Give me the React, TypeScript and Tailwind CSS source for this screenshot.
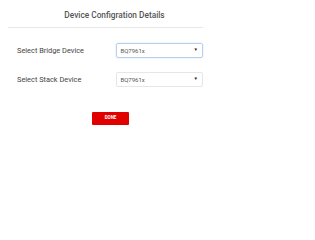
export default function App() {
  return (
    <div className="w-[315px] h-[240px] bg-white font-['Roboto',sans-serif] text-[#444]">
      <div className="w-[195px] ml-2">
        <div className="h-[28px] border-b border-[#e8e8e8] flex items-center justify-center pt-[4px] pl-[18px]">
          <h1 className="text-[8.3px] font-medium text-[#555]">Device Configration Details</h1>
        </div>
        <div className="pl-[9px] pt-[15px] flex flex-col gap-[14px]">
          <div className="flex items-center">
            <label className="w-[100px] text-[7.4px] text-[#444]">Select Bridge Device</label>
            <div className="w-[87px] h-[15px] border border-[#b8cfee] rounded-[2px] shadow-[0_0_2px_#cfe0f7] flex items-center justify-between pl-[3px] pr-1">
              <span className="text-[6px] text-[#555]">BQ7961x</span>
              <span className="text-[4.5px] text-[#222]">▼</span>
            </div>
          </div>
          <div className="flex items-center">
            <label className="w-[100px] text-[7.4px] text-[#444]">Select Stack Device</label>
            <div className="w-[87px] h-[15px] border border-[#e6e6e6] rounded-[2px] flex items-center justify-between pl-[3px] pr-1">
              <span className="text-[6px] text-[#555]">BQ7961x</span>
              <span className="text-[4.5px] text-[#222]">▼</span>
            </div>
          </div>
        </div>
        <div className="mt-[25px] ml-[84px]">
          <button className="w-[37px] h-[13px] bg-[#e00000] rounded-[1px] text-white text-[4.5px] font-bold flex items-center justify-center">DONE</button>
        </div>
      </div>
    </div>
  );
}
